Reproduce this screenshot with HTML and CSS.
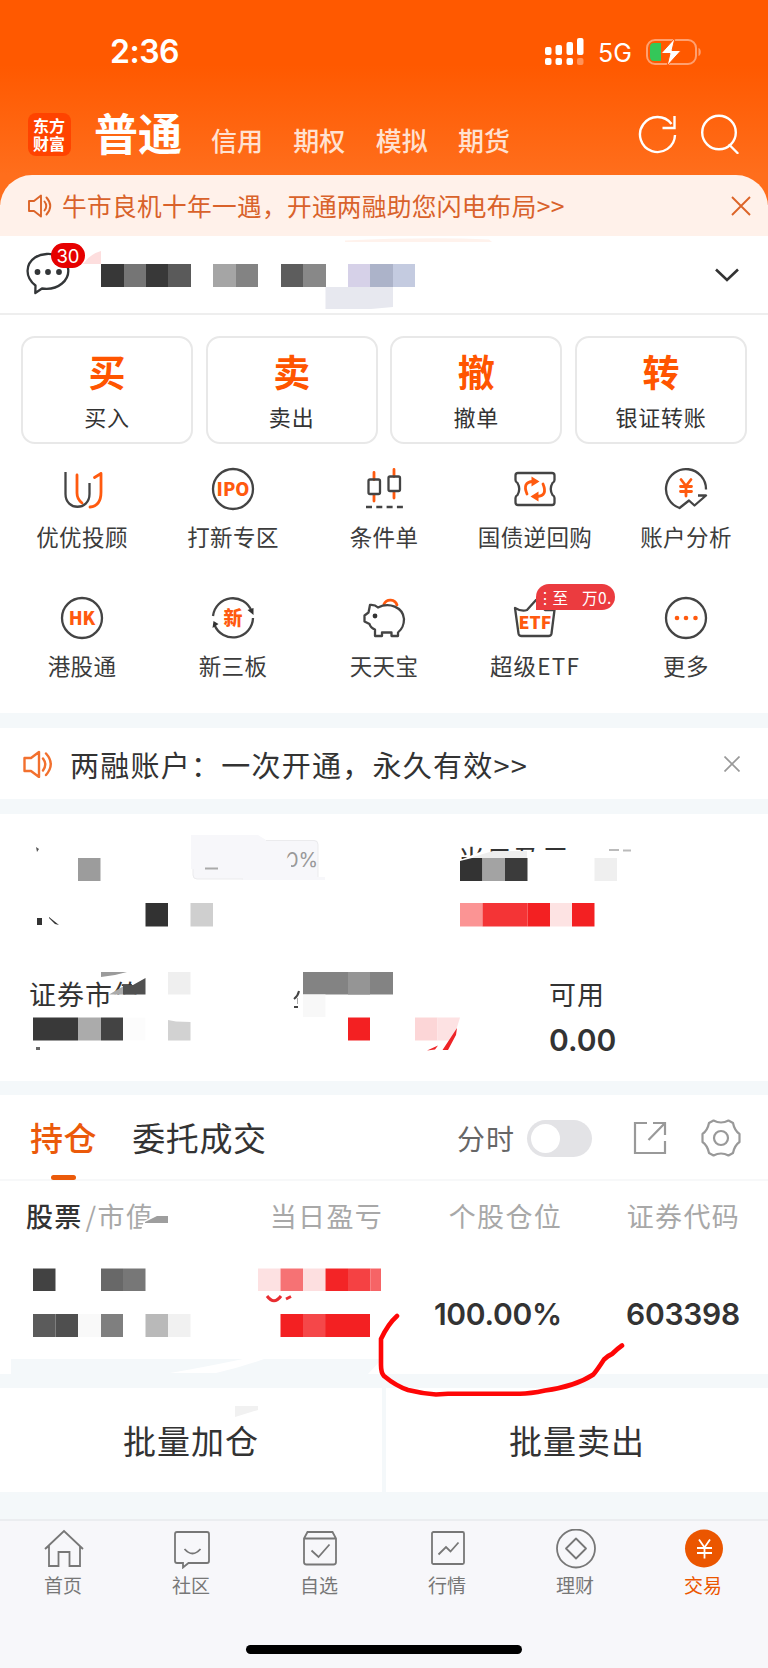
FILE: index.html
```html
<!DOCTYPE html>
<html lang="zh-CN">
<head>
    <meta charset="UTF-8">
    <meta name="viewport" content="width=device-width, initial-scale=1.0">
    <title>交易</title>
    <link rel="stylesheet" href="styles.css">
</head>
<body>
    <header class="header">
        <div class="status-bar">
            <span class="time">2:36</span>
            <div class="status-right">
                <svg class="signal" width="40" height="28" viewBox="0 0 40 28" fill="#fff">
                    <rect x="0" y="9" width="6.5" height="8" rx="2"/>
                    <rect x="10.5" y="7" width="6.5" height="10" rx="2"/>
                    <rect x="21.5" y="4" width="6.5" height="13" rx="2"/>
                    <rect x="32" y="0" width="6.5" height="17" rx="2"/>
                    <rect x="0" y="20" width="6.5" height="7" rx="2"/>
                    <rect x="10.5" y="20" width="6.5" height="7" rx="2"/>
                    <rect x="21.5" y="20" width="6.5" height="7" rx="2"/>
                    <rect x="32" y="20" width="6.5" height="7" rx="2" opacity="0.35"/>
                </svg>
                <span class="network">5G</span>
                <svg width="56" height="28" viewBox="0 0 56 28">
                    <rect x="1" y="2" width="49" height="24" rx="8" fill="none" stroke="#ffa070" stroke-width="2"/>
                    <path d="M52.5 10v8c3-1 3-7 0-8z" fill="#ffa070"/>
                    <path d="M8 5h7v18H8a4 4 0 0 1-4-4V9a4 4 0 0 1 4-4z" fill="#34c759"/>
                    <path d="M29 0 15 15.5h9L21 28 35 12.5h-9z" fill="#fff" stroke="#ff5a05" stroke-width="1"/>
                </svg>
            </div>
        </div>
        <nav class="top-nav">
            <div class="logo">东方财富</div>
            <a class="top-tab active">普通</a>
            <a class="top-tab">信用</a>
            <a class="top-tab">期权</a>
            <a class="top-tab">模拟</a>
            <a class="top-tab">期货</a>
            <div class="top-actions">
                <svg width="40" height="40" viewBox="0 0 40 40" fill="none" stroke="#fff" stroke-width="2.4">
                    <path d="M37 21A17.5 17.5 0 1 1 33.5 10"/>
                    <path d="M36.5 2v12h-12"/>
                </svg>
                <svg width="40" height="40" viewBox="0 0 40 40" fill="none" stroke="#fff" stroke-width="2.4" stroke-linecap="round">
                    <circle cx="19" cy="18.5" r="16.8"/>
                    <path d="M29.5 31l8 8"/>
                </svg>
            </div>
        </nav>
    </header>

    <div class="notice">
        <svg width="24" height="24" viewBox="0 0 24 24" fill="none" stroke="#dc6428" stroke-width="1.9" stroke-linejoin="round" stroke-linecap="round">
            <path d="M1 7h5l7-5.5v21L6 17H1z"/>
            <path d="M16.5 7.5q3.500 4.500 0 9M18.5 3.500q7.500 8.500 0 17"/>
        </svg>
        <span class="notice-text">牛市良机十年一遇，开通两融助您闪电布局&gt;&gt;</span>
        <svg class="close" width="20" height="20" viewBox="0 0 20 20" stroke="#dc6428" stroke-width="1.9"><path d="M1 1l18 18M19 1L1 19"/></svg>
    </div>

    <section class="account">
        <div class="message">
            <svg width="46" height="46" viewBox="0 0 46 46" fill="none" stroke="#333638" stroke-width="2.3">
                <path d="M9.5 33.5C-1.5 25-.5 12 9 5.500 15 1.500 26 .5 33 4.500c11 6 12.500 19 3 27-6 5-13 6-20 5L9.300 41z" stroke-linejoin="round"/>
                <g fill="#333638" stroke="none"><circle cx="11.5" cy="20" r="2.9"/><circle cx="22" cy="20" r="2.9"/><circle cx="33" cy="20" r="2.9"/></g>
            </svg>
            <span class="badge">30</span>
        </div>
        <svg class="chevron" width="24" height="14" viewBox="0 0 24 14" fill="none" stroke="#333" stroke-width="2.6"><path d="M1 1.500l11 10.500 11-10.500"/></svg>
        <svg class="mosaic" viewBox="0 236 768 78">
            <path d="M345 240.500Q430 236.500 489 239.500L492 242H345z" fill="#fff2ec"/>
            <path d="M84 263Q90 254 101 251v13H82z" fill="#fddede"/>
            <g shape-rendering="crispEdges">
                <path d="M101 264h22.500v23H101z" fill="#373737"/>
                <path d="M123.500 264H146v23h-22.500z" fill="#757575"/>
                <path d="M146 264h22v23h-22z" fill="#383838"/>
                <path d="M168 264h23v23h-23z" fill="#5a5a5a"/>
                <path d="M213 264h22.500v23H213z" fill="#a5a5a5"/>
                <path d="M235.500 264H258v23h-22.500z" fill="#838383"/>
                <path d="M280.500 264H303v23h-22.500z" fill="#5d5d5d"/>
                <path d="M303 264h22.500v23H303z" fill="#888"/>
                <path d="M348 264h22v23h-22z" fill="#d6d1e8"/>
                <path d="M370 264h23v23h-23z" fill="#acb3c9"/>
                <path d="M393 264h22v23h-22z" fill="#c4cbe0"/>
            </g>
            <path d="M325.500 287H393v20l-22 2h-45.500z" fill="#e7e8ef"/>
        </svg>
    </section>

    <section class="trade">
        <a class="trade-btn"><b>买</b><span>买入</span></a>
        <a class="trade-btn"><b>卖</b><span>卖出</span></a>
        <a class="trade-btn"><b>撤</b><span>撤单</span></a>
        <a class="trade-btn"><b>转</b><span>银证转账</span></a>
    </section>

    <section class="menu">
        <a class="menu-item">
            <svg viewBox="0 0 44 44">
                <path class="o" d="M17 8v18q0 6 5 10M41 15V6.500l-6.500 4M41 6.500V25q0 14-11 15"/>
                <path class="d" d="M5.500 5v22c0 17 24 17 24 0V16"/>
            </svg>
            <span>优优投顾</span>
        </a>
        <a class="menu-item">
            <svg viewBox="0 0 44 44"><circle class="d" cx="22" cy="22" r="20"/><text x="22" y="28.5" class="t" font-size="18">IPO</text></svg>
            <span>打新专区</span>
        </a>
        <a class="menu-item">
            <svg viewBox="0 0 44 44">
                <path class="o" d="M12 5.500v7M12 28v6M32 2.500v7M32 25v6"/>
                <rect class="d" x="6.5" y="12.5" width="11.5" height="14.5" rx="1.5"/>
                <rect class="d" x="26.5" y="9.5" width="11.5" height="14.5" rx="1.5"/>
                <path class="d" d="M4 40h37" stroke-dasharray="6 4.3"/>
            </svg>
            <span>条件单</span>
        </a>
        <a class="menu-item">
            <svg viewBox="0 0 44 44">
                <path class="d" d="M5 6h34q2.500 0 2.500 2.500V13q0 2-2 3-3.500 6 0 12 2 1 2 3v4.500q0 2.500-2.500 2.500H5q-2.500 0-2.500-2.500V31q0-2 2-3 3.500-6 0-12-2-1-2-3V8.500Q2.500 6 5 6z"/>
                <path class="o" d="M14 27q-5-12 6-12.500h3M30 17q5 12-6 12.500h-3"/>
                <path d="M18.500 9.500l8 5-8 5zM25.500 24.500l-8 5 8 5z" fill="#ff5a0f"/>
            </svg>
            <span>国债逆回购</span>
        </a>
        <a class="menu-item">
            <svg viewBox="0 0 44 44">
                <path class="d" d="M42 22.500A20 20 0 1 0 15.500 41L25 33.500l5.500 5L42 28.500h-8"/>
                <path class="o" d="M17 12.500l5 6.500 5-6.500M22 19v10M16.500 19.500h11M16.500 24.500h11"/>
            </svg>
            <span>账户分析</span>
        </a>
        <a class="menu-item">
            <svg viewBox="0 0 44 44"><circle class="d" cx="22" cy="22" r="20"/><text x="22" y="28.5" class="t" font-size="18">HK</text></svg>
            <span>港股通</span>
        </a>
        <a class="menu-item">
            <svg viewBox="0 0 44 44">
                <path class="d" d="M2 20A20 20 0 0 1 40.500 15M42 22A20 20 0 0 1 3.500 29"/>
                <path d="M36.500 14l6-2v7zM1.500 32l1-7 5 3z" fill="#333"/>
                <text x="22" y="29" class="t" font-size="19">新</text>
            </svg>
            <span>新三板</span>
        </a>
        <a class="menu-item">
            <svg viewBox="0 0 44 44">
                <path class="o" d="M22 8a7 7 0 0 1 13 1"/>
                <path class="d" d="M8 9q5-.5 8 2.500C27 6 41 11 42 23c0 7-2 10-6 13.500V40h-6.500v-3.500H20V40h-7v-6.500C9 32 8 30 7.500 28L2.500 25.500v-6l4-3z"/>
                <circle cx="13" cy="20" r="2.4" fill="#333"/>
            </svg>
            <span>天天宝</span>
        </a>
        <a class="menu-item">
            <svg viewBox="0 0 44 44">
                <path class="d" d="M2 12q7 4 12 2l9-10 9 10h9.500l-3 23.500q-.4 2.500-3 2.500H8.500q-2.500 0-3-2.500z"/>
                <text x="22" y="33" class="t" font-size="17.5">ETF</text>
            </svg>
            <i class="promo">&#8942;至<em>万0.</em></i>
            <span class="wide-text">超级ETF</span>
        </a>
        <a class="menu-item">
            <svg viewBox="0 0 44 44"><circle class="d" cx="22" cy="22" r="20"/><g fill="#ff5a0f"><circle cx="13" cy="22" r="2.3"/><circle cx="22" cy="22" r="2.3"/><circle cx="31.5" cy="22" r="2.3"/></g></svg>
            <span>更多</span>
        </a>
    </section>

    <section class="tips">
        <svg width="30" height="28" viewBox="0 0 30 28" fill="none" stroke="#f2702e" stroke-width="2.4" stroke-linejoin="round" stroke-linecap="round">
            <path d="M1.500 8h6.500l8-6v25L8 21H1.500z"/>
            <path d="M20 8.500q4.500 6 0 12M23 3.500q9.500 10.500 0 21.500"/>
        </svg>
        <span class="tips-text">两融账户：一次开通，永久有效&gt;&gt;</span>
        <svg class="close" width="16" height="16" viewBox="0 0 16 16" stroke="#999" stroke-width="1.7"><path d="M.5.5l15 15M15.500.5l-15 15"/></svg>
    </section>

    <section class="assets">
        <div class="asset-row">
            <div class="asset wide"></div>
            <div class="asset"><span class="asset-name">当日盈亏</span></div>
        </div>
        <div class="asset-row">
            <div class="asset market"><span class="asset-name">证券市值</span></div>
            <div class="asset"><span class="asset-name">可用</span><strong>0.00</strong></div>
        </div>
        <svg class="mosaic" viewBox="0 814 768 267">
            <path d="M36 847l3 2-2 3zM33 852l3-2z" fill="#555"/>
            <path d="M78 858h22.500v23H78z" fill="#9c9c9c"/>
            <path d="M191 835h67l8 5h48q4 0 4 4v33h7v3h-82l-2-1h-44q-4 0-4-4v-6h-2z" fill="#f7f7fa"/>
            <path d="M266 840.500h48q4 0 4 4V877M193 869v6q0 4 4 4h46" fill="none" stroke="#ebebed"/>
            <text x="286" y="867" class="pct">0%</text>
            <path d="M284 862l7-8v14h-7z" fill="#f7f7fa"/>
            <path d="M205 868.500h13" stroke="#aaa" stroke-width="2"/>
            <path d="M37 918h5v7h-5zM49 917l10 8-4-1-6-6z" fill="#333"/>
            <path d="M145.500 903H168v23.500h-22.500z" fill="#323232"/>
            <path d="M190.500 903H213v23.500h-22.500z" fill="#cfcfcf"/>

            <path d="M455 862l25-10h105v29H455z" fill="#fff"/>
            <path d="M473 857l20-6h34v7h-54z" fill="#eee"/>
            <path d="M460 861l12-3h10.500v23H460z" fill="#333"/>
            <path d="M482.500 858H505v23h-22.500z" fill="#a3a3a3"/>
            <path d="M505 858h22.500v23H505z" fill="#3b3b3b"/>
            <path d="M594.500 858H617v23h-22.500z" fill="#efefef"/>
            <path d="M609 850h10M623 850.500h8" stroke="#bbb" stroke-width="2"/>
            <path d="M460 903h22.500v23.500H460z" fill="#fb9494"/>
            <path d="M482.500 903h45v23.500h-45z" fill="#f43436"/>
            <path d="M527.500 903H550v23.500h-22.500z" fill="#f32022"/>
            <path d="M550 903h22v23.500h-22z" fill="#fde3e3"/>
            <path d="M572 903h22.500v23.500H572z" fill="#f32022"/>

            <path d="M109 994.500h42V1012h-42zM132 975h19v19h-19z" fill="#fff"/>
            <path d="M101 972h26l-12 3-14 2z" fill="#9b9b9b"/>
            <path d="M109 994.500l14-8v8z" fill="#aaa"/>
            <path d="M123 985h10l12.500-7v16.500H123z" fill="#505050"/>
            <path d="M168 972h22.500v22.500H168z" fill="#efefef"/>
            <path d="M33 1017.500h45v23H33z" fill="#393939"/>
            <path d="M78 1017.500h23v23H78z" fill="#ababab"/>
            <path d="M101 1017.500h22v23h-22z" fill="#434343"/>
            <path d="M123 1017.500h22.500v23H123z" fill="#fcfcfc"/>
            <path d="M168 1020l8 1.500 14.500.5v18.500H168z" fill="#d2d2d2"/>
            <path d="M36 1047h4v3h-4z" fill="#666"/>

            <path d="M303 972h90v22.500h-90z" fill="#838383"/>
            <path d="M348 972h22v22.500h-22z" fill="#959595"/>
            <path d="M303 994.500h22.500V1017H303z" fill="#f8f8f8"/>
            <path d="M299 991q-1 5-5 8M294 1007h4" fill="none" stroke="#444" stroke-width="2"/>
            <path d="M297.500 998v6" stroke="#aaa"/>
            <path d="M348 1017.500h22v23h-22z" fill="#f32022"/>
            <path d="M415 1017.500h22.500v23H415z" fill="#fcd6d7"/>
            <path d="M437.500 1017.500H460l-4 13-4 10h-14.500z" fill="#fde2e3"/>
            <path d="M457 1028l-1 7-8 15h-5.500zM427 1050.500l11-5-3 4z" fill="#ee2428"/>
        </svg>
    </section>

    <section class="tabs">
        <a class="tab active">持仓</a>
        <a class="tab">委托成交</a>
        <div class="tab-tools">
            <span>分时</span>
            <i class="switch"></i>
            <svg class="export" width="34" height="34" viewBox="0 0 34 34" fill="none" stroke="#999" stroke-width="2.2">
                <path d="M14 2H2v30h30V20M20 2h12v12M32 2L15.500 19"/>
            </svg>
            <svg width="40" height="40" viewBox="0 0 40 40" fill="none" stroke="#999" stroke-width="2.2" stroke-linejoin="round">
                <circle cx="20" cy="20" r="7"/>
                <path d="M12.500 2.500Q20 6.500 27.500 2.500L32 5q1.500 7.500 6.500 11v8q-5 3.500-6.500 11l-4.500 2.500q-7.500-4-15 0L8 35q-1.500-7.500-6.500-11v-8Q6.500 12.500 8 5z"/>
            </svg>
        </div>
    </section>

    <section class="holdings">
        <div class="holding-row head">
            <span class="left"><b>股票</b><u>/</u>市值</span><span>当日盈亏</span><span>个股仓位</span><span>证券代码</span>
        </div>
        <div class="holding-row body">
            <span></span><span></span><strong>100.00%</strong><strong>603398</strong>
        </div>
        <svg class="mosaic" viewBox="0 1181 768 193">
            <path d="M141 1230l3-9 9-5h16v17h-28z" fill="#fff"/>
            <path d="M145 1222l12-6h11v7h-23z" fill="#9e9e9e"/>
            <path d="M33 1268.500h22.500V1291H33z" fill="#424242"/>
            <path d="M101 1268.500h22V1291h-22z" fill="#686868"/>
            <path d="M123 1268.500h22.500V1291H123z" fill="#777"/>
            <path d="M258 1268.500h22.500V1291H258z" fill="#fde1e2"/>
            <path d="M280.500 1268.500H303V1291h-22.500z" fill="#f67274"/>
            <path d="M303 1268.500h22.500V1291H303z" fill="#fddfe0"/>
            <path d="M325.500 1268.500H348V1291h-22.500z" fill="#f32426"/>
            <path d="M348 1268.500h22.500V1291H348z" fill="#f54143"/>
            <path d="M370.500 1268.500H381V1291h-10.500z" fill="#f66466"/>
            <path d="M267 1296q7 9.500 14 0M286 1299l5-2.500" fill="none" stroke="#e82c30" stroke-width="3"/>
            <path d="M33 1314h22.500v23H33z" fill="#5b5b5b"/>
            <path d="M55.500 1314H78v23H55.500z" fill="#4f4f4f"/>
            <path d="M78 1314h23v23H78z" fill="#f9f9f9"/>
            <path d="M101 1314h22v23h-22z" fill="#7f7f7f"/>
            <path d="M145.500 1314H168v23h-22.500z" fill="#b9b9b9"/>
            <path d="M168 1314h22.500v23H168z" fill="#f1f1f1"/>
            <path d="M280.500 1314h89.500v23h-89.500z" fill="#f32022"/>
            <path d="M303 1314h22.500v23H303z" fill="#f54749"/>
            <path d="M11 1359h232q-38 8-73 14h46q26-6 48-14h118l-14 15H11z" fill="#f4f8fa"/>
        </svg>
        <svg class="marker" width="250" height="88" viewBox="375 1310 250 88">
            <path d="M397 1316q-9 8-16 23v26q0 8 3 11 12 10 24 14 14 3.500 28 4.500l12-.8h72q10 0 25-3.200 30-4 48-15.700 3-3 11-15.300 4-4 8-5.500 5-5 10-8.500" fill="none" stroke="#fe0606" stroke-width="4.6" stroke-linecap="round"/>
        </svg>
    </section>

    <section class="batch">
        <a>批量加仓</a>
        <a>批量卖出</a>
        <svg class="smudge" width="23" height="11" viewBox="0 0 23 11"><path d="M0 0h23v4L0 11z" fill="#f1f1f1"/></svg>
    </section>

    <nav class="tabbar">
        <div class="tabbar-items">
            <a class="tabbar-item">
                <svg viewBox="0 0 40 40"><path d="M1 20L20 2l19 18-3-2.500V37H25.500V23h-11v14H5V17z"/></svg>
                <span>首页</span>
            </a>
            <a class="tabbar-item">
                <svg viewBox="0 0 40 40"><path d="M5 3h30q2 0 2 2v27q0 2-2 2H16.500l-5.500 4.500V34H5q-2 0-2-2V5q0-2 2-2zM12.500 20q8 9 16 0"/></svg>
                <span>社区</span>
            </a>
            <a class="tabbar-item">
                <svg viewBox="0 0 40 40"><path d="M4 9.500L7.500 3h25L36 9.500V33q0 2.500-2.500 2.500h-27Q4 35.500 4 33zM4 9.500h32M11.500 21.500l7 6.500 11-12.500"/></svg>
                <span>自选</span>
            </a>
            <a class="tabbar-item">
                <svg viewBox="0 0 40 40"><rect x="4" y="3" width="32" height="32" rx="1.5"/><path d="M10.500 25.500l7.500-7.500 4.500 4.500 8-9"/></svg>
                <span>行情</span>
            </a>
            <a class="tabbar-item">
                <svg viewBox="0 0 40 40"><circle cx="20" cy="19.5" r="19"/><path d="M20 9.500l10 10-10 10-10-10z" stroke-linejoin="round"/></svg>
                <span>理财</span>
            </a>
            <a class="tabbar-item active">
                <svg viewBox="0 0 40 40"><circle cx="20" cy="19.5" r="19" fill="#eb5600" stroke="none"/><path d="M15 10.500l5.500 8 5.500-8M13 19h15M13 24h15M20.500 18.500v11" stroke="#fff"/></svg>
                <span>交易</span>
            </a>
        </div>
        <div class="home-indicator"></div>
    </nav>
</body>
</html>
```
FILE: styles.css
```css
* {
    box-sizing: border-box;
    margin: 0;
    padding: 0;
}

body {
    width: 768px;
    height: 1668px;
    overflow: hidden;
    font-family: "Noto Sans CJK SC", sans-serif;
    color: #333;
    background-color: #f4f8fa;
}

svg {
    display: block;
    flex-shrink: 0;
}

/* 顶部 */
.header {
    height: 205px;
    background: linear-gradient(#ff5900 0, #ff5900 65px, #ff6e1c 175px);
}

.status-bar {
    display: flex;
    justify-content: space-between;
    align-items: center;
    height: 104px;
    padding: 0 66px 0 110px;
    color: #fff;
}

.time {
    font: 600 32px/40px Inter, sans-serif;
    letter-spacing: -0.5px;
}

.status-right {
    display: flex;
    align-items: center;
}

.network {
    width: 48px;
    margin-left: 13px;
    padding-top: 1px;
    font: 400 25px/30px Inter, sans-serif;
}

.top-nav {
    display: flex;
    align-items: center;
    height: 60px;
    padding: 0 28px;
    color: #fff;
}

.logo {
    width: 43px;
    height: 43px;
    padding: 3px 5px;
    margin-right: 23px;
    border-radius: 8px;
    background-color: #ff4300;
    font-size: 16px;
    font-weight: 700;
    line-height: 18px;
}

.top-tab {
    margin-right: 30.3px;
    padding-top: 11px;
    font-size: 26px;
    font-weight: 500;
    line-height: 40px;
    color: #ffe1d1;
}

.top-tab.active {
    padding-top: 0;
    padding-bottom: 4px;
    font-size: 44px;
    font-weight: 700;
    line-height: 60px;
    margin-right: 29px;
    color: #fff;
}

.top-actions {
    display: flex;
    gap: 22px;
    margin-left: auto;
}

.notice {
    display: flex;
    align-items: center;
    height: 61px;
    margin-top: -30px;
    padding: 0 17px 0 28px;
    border-radius: 32px 32px 0 0;
    background-color: #fff1ea;
}

.notice-text {
    margin-left: 10px;
    padding-bottom: 2px;
    font-size: 24.7px;
    letter-spacing: 0.3px;
    line-height: 36px;
    color: #d9622b;
}

.close {
    margin-left: auto;
}

/* 账户 */
.account {
    position: relative;
    display: flex;
    justify-content: space-between;
    align-items: center;
    height: 79px;
    padding: 0 29px 0 26px;
    border-bottom: 2px solid #eee;
    background-color: #fff;
}

.message {
    position: relative;
}

.badge {
    position: absolute;
    z-index: 1;
    left: 25px;
    top: -9px;
    width: 34px;
    height: 25px;
    border-radius: 13px;
    background-color: #e60000;
    color: #fff;
    font: 400 18.5px/26px Inter, sans-serif;
    text-align: center;
}

.mosaic {
    position: absolute;
    left: 0;
    top: 0;
    width: 768px;
}

/* 交易按钮 */
.trade {
    display: grid;
    grid-template-columns: repeat(4, 1fr);
    gap: 12.7px;
    padding: 21px 21px 0;
    background-color: #fff;
}

.trade-btn {
    display: flex;
    flex-direction: column;
    align-items: center;
    height: 108px;
    border: 2px solid #e8e8e8;
    border-radius: 14px;
}

.trade-btn b {
    margin-top: 6px;
    font-size: 37px;
    line-height: 54px;
    color: #ff5500;
}

.trade-btn span {
    margin-top: 1px;
    font-size: 22px;
    letter-spacing: 0.8px;
    line-height: 34px;
}

.menu {
    display: grid;
    grid-template-columns: repeat(5, 151px);
    grid-auto-rows: 129px;
    justify-content: center;
    height: 269px;
    padding-top: 23px;
    background-color: #fff;
}

.menu-item {
    position: relative;
    display: flex;
    flex-direction: column;
    align-items: center;
}

.menu-item svg {
    width: 44px;
    height: 44px;
}

.menu-item span {
    margin-top: 8px;
    font-size: 22.5px;
    line-height: 34px;
    letter-spacing: 0.4px;
    color: #3c3c3c;
}

.menu-item .wide-text {
    letter-spacing: 1.2px;
}

.d,
.o {
    fill: none;
    stroke: #444;
    stroke-width: 2.3px;
    stroke-linejoin: round;
}

.o {
    stroke: #ff5a0f;
    stroke-width: 2.8px;
    stroke-linecap: round;
}

.t {
    fill: #ff5a0f;
    font-family: "Noto Sans CJK SC", sans-serif;
    font-weight: 900;
    text-anchor: middle;
}

.promo {
    position: absolute;
    left: 76px;
    top: -12px;
    width: 79px;
    height: 26px;
    padding-left: 1px;
    border-radius: 13px 13px 13px 0;
    background-color: #eb3b3f;
    color: #fff;
    font-size: 15.5px;
    font-style: normal;
    line-height: 26px;
    white-space: nowrap;
    overflow: hidden;
}

.promo em {
    margin-left: 14px;
    font-style: normal;
    letter-spacing: 0.5px;
}

/* 提示 */
.tips {
    display: flex;
    align-items: center;
    height: 71px;
    margin: 15px 0;
    padding: 0 28px 0 23px;
    background-color: #fff;
}

.tips-text {
    margin-left: 17px;
    font-size: 29px;
    letter-spacing: 1.25px;
    line-height: 44px;
}

/* 资产 */
.assets {
    position: relative;
    height: 267px;
    padding: 25px 29px 0;
    background-color: #fff;
}

.asset-row {
    display: flex;
    height: 135px;
}

.asset.wide {
    width: 429px;
}

.asset.market {
    width: 520px;
}

.asset-name {
    display: block;
    font-size: 27px;
    letter-spacing: 1px;
    line-height: 40px;
}

.asset strong,
.holding-row strong {
    display: block;
    font: 600 30px/44px Inter, sans-serif;
}

.asset strong {
    margin-top: 4px;
}

.pct {
    font: 20px Inter, sans-serif;
    fill: #999;
}

/* 持仓 */
.tabs {
    display: flex;
    height: 86px;
    margin-top: 14px;
    padding: 0 27px 0 30px;
    border-bottom: 2px solid #f7f8f9;
    background-color: #fff;
}

.tab {
    position: relative;
    margin-right: 35px;
    font-size: 33px;
    letter-spacing: 0.6px;
    line-height: 84px;
}

.tab.active {
    font-weight: 500;
    color: #eb5a0a;
}

.tab.active::after {
    content: "";
    position: absolute;
    left: 21px;
    bottom: -1px;
    width: 25px;
    height: 5px;
    border-radius: 3px;
    background-color: #eb5a0a;
}

.tab-tools {
    display: flex;
    align-items: center;
    margin-left: auto;
    padding-top: 2px;
    font-size: 28px;
    letter-spacing: 1px;
    color: #666;
}

.switch {
    width: 65px;
    height: 37px;
    margin-left: 12px;
    padding: 4px;
    border-radius: 19px;
    background-color: #e3e3e6;
}

.switch::before {
    content: "";
    display: block;
    width: 29px;
    height: 29px;
    border-radius: 50%;
    background-color: #fff;
}

.export {
    margin: 0 34px 0 41px;
}

.holdings {
    position: relative;
    height: 193px;
    background-color: #fff;
}

.holding-row {
    display: grid;
    grid-template-columns: 204px 179px 179px 178px;
    text-align: right;
}

.head {
    padding-top: 14px;
    font-size: 27px;
    letter-spacing: 1.3px;
    line-height: 42px;
    color: #a8a8a8;
}

.head .left {
    padding-left: 26px;
    text-align: left;
}

.head b {
    font-weight: 500;
    color: #333;
}

.head u {
    margin: 0 0 0 3px;
    text-decoration: none;
}

.body {
    padding-top: 55px;
}

.body strong {
    letter-spacing: -0.25px;
}

.marker {
    position: absolute;
    z-index: 1;
    left: 375px;
    top: 129px;
}

.batch {
    position: relative;
    display: grid;
    grid-template-columns: 382px 382px;
    gap: 4px;
    margin-top: 14px;
}

.batch a {
    height: 104px;
    background-color: #fff;
    font-size: 33px;
    letter-spacing: 1px;
    line-height: 104px;
    text-align: center;
}

.smudge {
    position: absolute;
    left: 235px;
    top: 18px;
}

/* 底部导航 */
.tabbar {
    height: 149px;
    margin-top: 27px;
    border-top: 2px solid #ebedf0;
    background-color: #f7f7fa;
}

.tabbar-items {
    display: grid;
    grid-template-columns: repeat(6, 1fr);
    height: 124px;
    padding-top: 8px;
}

.tabbar-item {
    display: flex;
    flex-direction: column;
    align-items: center;
    font-size: 19px;
    line-height: 28px;
    color: #777;
}

.tabbar-item span {
    padding-right: 2px;
}

.tabbar-item svg {
    width: 40px;
    height: 40px;
    margin-bottom: 2px;
    fill: none;
    stroke: #777;
    stroke-width: 1.8px;
}

.tabbar-item.active {
    color: #eb5600;
}

.home-indicator {
    width: 276px;
    height: 9px;
    margin: 0 auto;
    border-radius: 5px;
    background-color: #000;
}
```
